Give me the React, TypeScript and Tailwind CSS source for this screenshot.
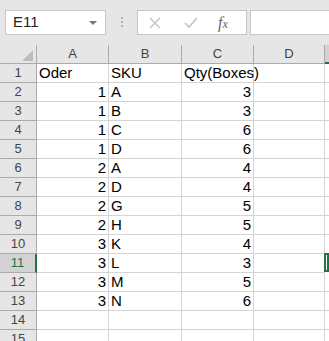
const rows: [number | null, string, number | null][] = [
  [1, "A", 3],
  [1, "B", 3],
  [1, "C", 6],
  [1, "D", 6],
  [2, "A", 4],
  [2, "D", 4],
  [2, "G", 5],
  [2, "H", 5],
  [3, "K", 4],
  [3, "L", 3],
  [3, "M", 5],
  [3, "N", 6],
];

const cols = "grid grid-cols-[37px_72px_73px_72px_71px_1fr]";
const cell = "h-[19px] border-r border-b border-[#d4d4d4] overflow-visible whitespace-nowrap leading-[18px] text-[15px] text-black";
const hdr = "h-[19px] border-r border-b border-[#ababab] bg-[#e6e6e6] text-center text-[13px] leading-[18px] text-[#444]";

export default function App() {
  const body: { n: number; a: string; b: string; c: string }[] = [
    { n: 1, a: "Oder", b: "SKU", c: "Qty(Boxes)" },
    ...rows.map((r, i) => ({ n: i + 2, a: String(r[0]), b: r[1], c: String(r[2]) })),
    { n: 14, a: "", b: "", c: "" },
    { n: 15, a: "", b: "", c: "" },
  ];

  return (
    <div className="w-[329px] h-[341px] overflow-hidden bg-white font-['Liberation_Sans',Arial,sans-serif]">
      {/* formula bar */}
      <div className="h-[45px] bg-[#e6e6e6] flex items-start pt-[10px] pl-[5px]">
        <div className="w-[101px] h-[25px] bg-white border border-[#c6c6c6] flex items-center justify-between pl-[7px] pr-[8px]">
          <span className="text-[15px] text-[#222]">E11</span>
          <span className="w-0 h-0 border-l-[4px] border-r-[4px] border-t-[4px] border-l-transparent border-r-transparent border-t-[#777]" />
        </div>
        <div className="w-[31px] flex flex-col items-center gap-[2px] pt-[7px]">
          <span className="w-[2px] h-[2px] bg-[#b0b0b0]" />
          <span className="w-[2px] h-[2px] bg-[#b0b0b0]" />
          <span className="w-[2px] h-[2px] bg-[#b0b0b0]" />
        </div>
        <div className="w-[110px] h-[25px] bg-white border border-[#c6c6c6] flex items-center">
          <svg width="12" height="12" viewBox="0 0 12 12" className="ml-[11px]">
            <path d="M1 1L11 11M11 1L1 11" stroke="#c2c2c2" strokeWidth="1.3" fill="none" />
          </svg>
          <svg width="14" height="12" viewBox="0 0 14 12" className="ml-[23px]">
            <path d="M1 6L5 10L13 1" stroke="#c2c2c2" strokeWidth="1.6" fill="none" />
          </svg>
          <span className="ml-[20px] text-[16px] italic text-[#666] font-['Liberation_Serif',serif] leading-none">f<span className="text-[12px]">x</span></span>
        </div>
        <div className="ml-[3px] flex-1 h-[25px] bg-white border border-[#c6c6c6] border-r-0" />
      </div>

      {/* column headers */}
      <div className={cols}>
        <div className={`${hdr} flex items-end justify-end pr-[3px] pb-[2px]`}>
          <svg width="11" height="11" viewBox="0 0 11 11">
            <path d="M11 0L11 11L0 11Z" fill="#bdbdbd" />
          </svg>
        </div>
        <div className={hdr}>A</div>
        <div className={hdr}>B</div>
        <div className={hdr}>C</div>
        <div className={hdr}>D</div>
        <div className="h-[19px] bg-[#d2d2d2] border-b-2 border-[#217346]" />
      </div>

      {/* rows */}
      {body.map((r) => {
        const active = r.n === 11;
        return (
          <div key={r.n} className={cols}>
            <div
              className={
                active
                  ? "h-[19px] border-b border-[#ababab] border-r-2 border-r-[#217346] bg-[#d2d2d2] text-center text-[13px] leading-[18px] text-[#217346]"
                  : hdr
              }
            >
              {r.n}
            </div>
            <div className={`${cell} text-right pr-[2px]`}>{r.n === 1 ? <span className="block text-left pl-[2px]">{r.a}</span> : r.a}</div>
            <div className={`${cell} pl-[2px]`}>{r.b}</div>
            <div className={`${cell} ${r.n === 1 ? "pl-[2px] relative z-10" : "text-right pr-[2px]"}`}>{r.c}</div>
            <div className={cell} />
            <div className={active ? "h-[19px] border-2 border-[#217346] -mt-[1px] -ml-[1px]" : "h-[19px] border-b border-[#d4d4d4]"} />
          </div>
        );
      })}
    </div>
  );
}
